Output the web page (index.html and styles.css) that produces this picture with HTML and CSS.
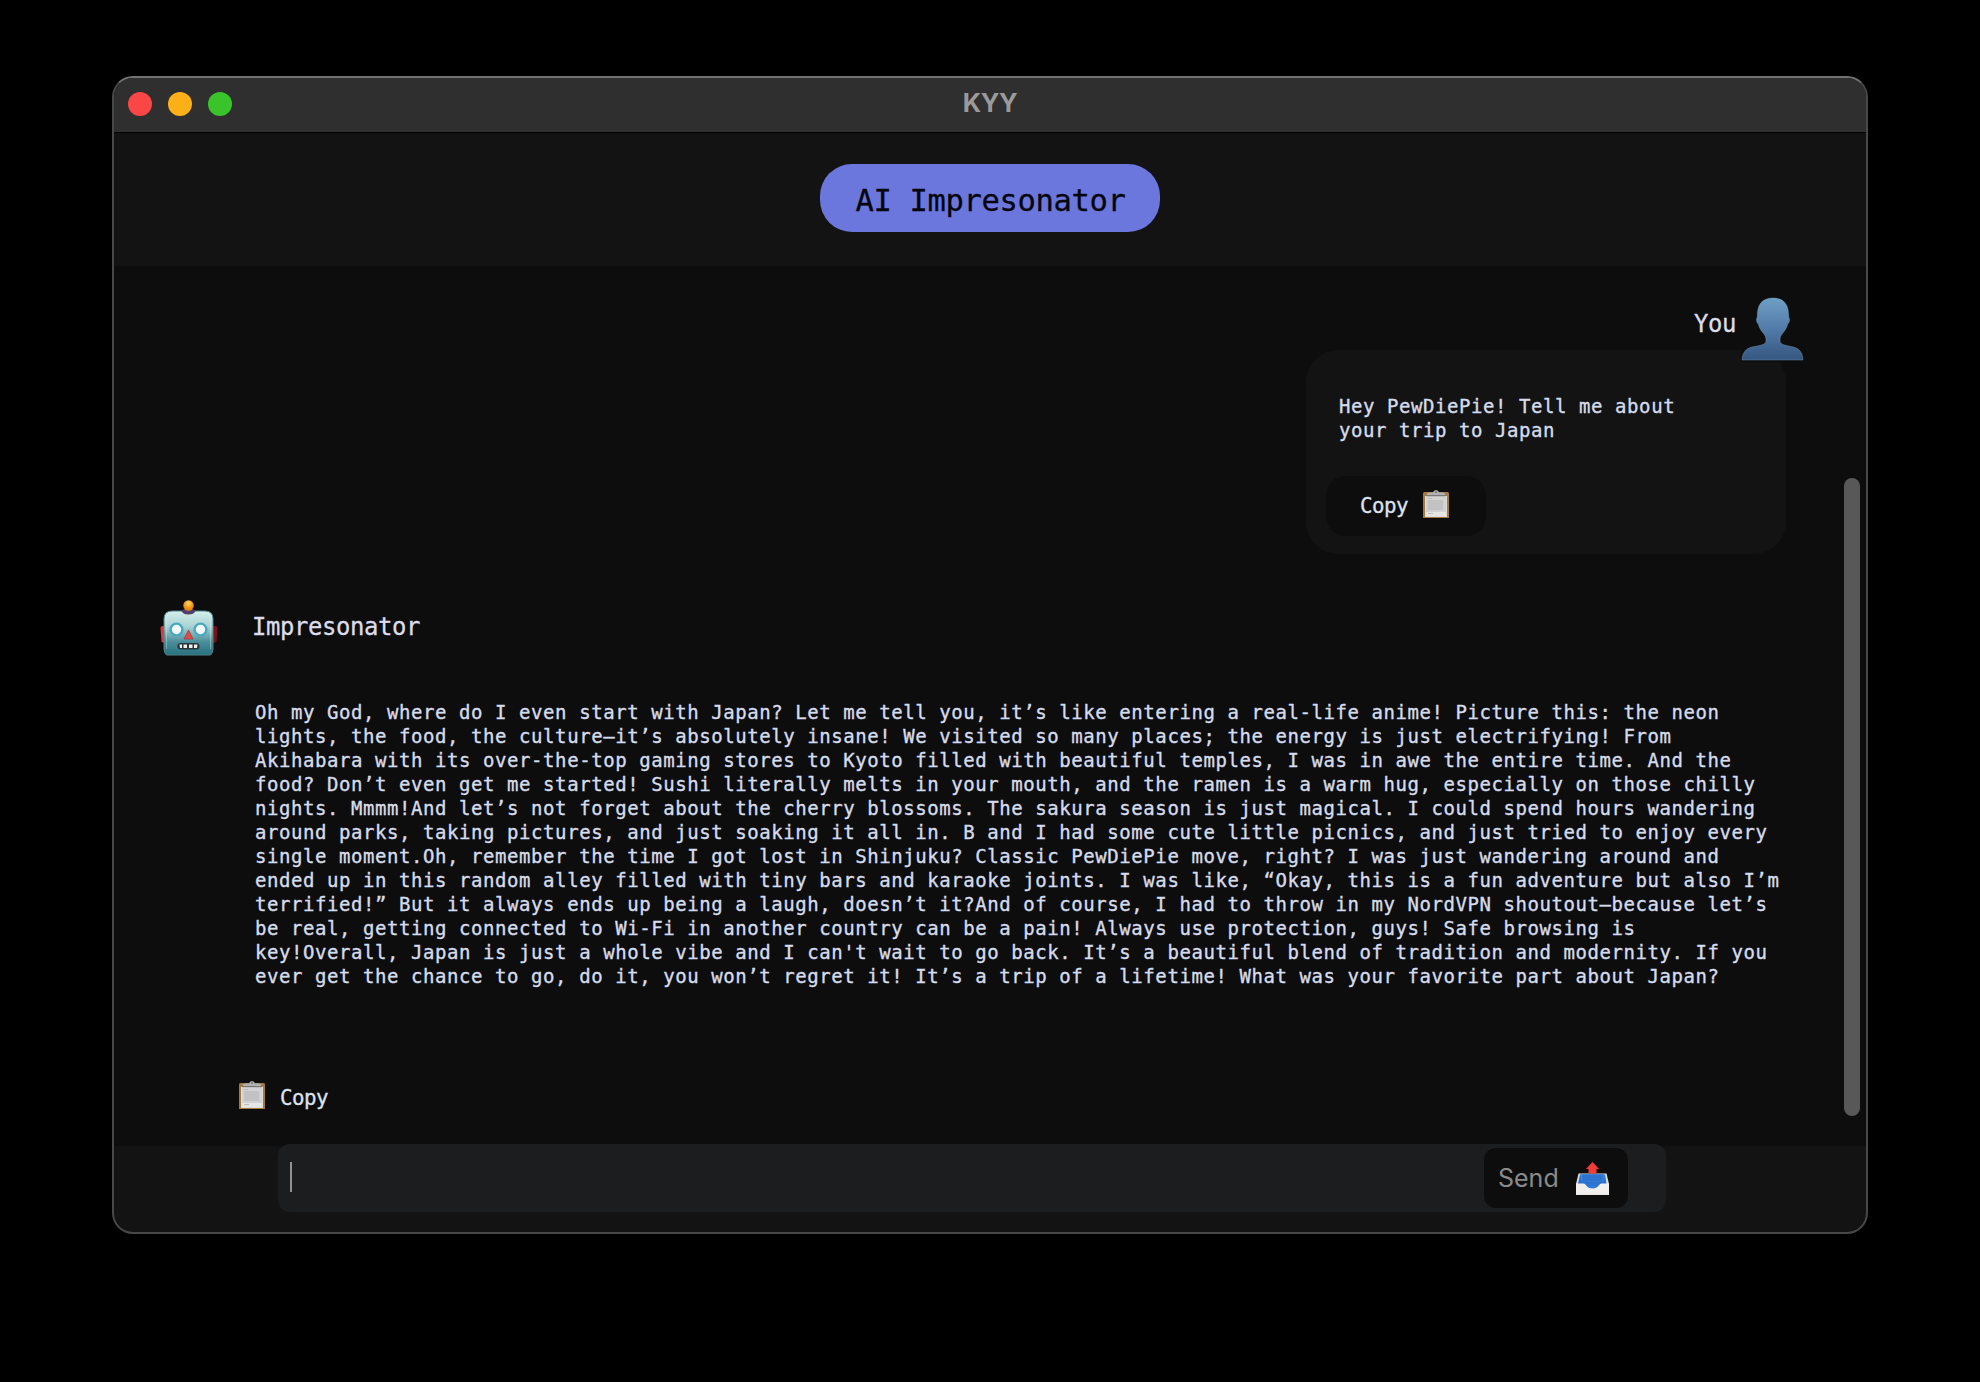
FILE: index.html
```html
<!DOCTYPE html>
<html lang="en">
<head>
<meta charset="utf-8">
<title>KYY</title>
<link rel="stylesheet" href="styles.css">
</head>
<body>
<svg class="defs" width="0" height="0" aria-hidden="true">
  <defs>
    <linearGradient id="paper" x1="0" y1="0" x2="0" y2="1"><stop offset="0" stop-color="#c4c4c4"/><stop offset="1" stop-color="#ececec"/></linearGradient>
    <symbol id="clipboard" viewBox="0 0 26 28">
      <path d="M0 3.500Q0 2 1.500 2H24.500Q26 2 26 3.500V28H0Z" fill="#a27a40"/>
      <path d="M2 6H24V27H2Z" fill="#dedddb"/>
      <path d="M3 7H23V26H3Z" fill="#d2d2d2"/>
      <path d="M3 22H23V26H3Z" fill="#e6e6e6"/>
      <path d="M5 10H20V20H5Z" fill="#c2c2c2"/>
      <path d="M5 8.500H9M5 23.500H10" stroke="#bcbcbc"/>
      <path d="M4 6V4Q4 2.500 6 2.500H10Q10.500 0 13 0T16 2.500H20Q22 2.500 22 4V6Z" fill="#b0b1b5"/>
      <path d="M3.500 5.700H22.500" stroke="#77746d" stroke-width="1.200"/>
      <circle cx="13" cy="2" r="1" fill="#71747c"/>
    </symbol>
  </defs>
</svg>
<main class="window">
  <header class="titlebar">
    <div class="lights"><i class="light red"></i><i class="light yellow"></i><i class="light green"></i></div>
    <h1 class="window-title">KYY</h1>
  </header>
  <section class="app-header">
    <div class="pill"><span class="mono pill-text">AI Impresonator</span></div>
  </section>
  <section class="chat">
    <div class="messages">
      <div class="sender-you">
        <span class="mono name">You</span>
        <svg class="avatar" viewBox="0 0 63 65">
          <defs><linearGradient id="bust" x1="0" y1="0" x2="0" y2="1"><stop offset="0" stop-color="#6f9fc5"/><stop offset=".5" stop-color="#527ba9"/><stop offset="1" stop-color="#355680"/></linearGradient></defs>
          <path d="M0 52H63V65H0Z" fill="#0d0d0d"/>
          <path d="M1 63C1.500 55.500 5 51.500 11 50C18 48.500 25 48 25 44C25 40 24.500 39 22.500 36.500C20 33.500 18 30.500 17.300 27C15.500 26 14.800 22 16.300 20C16 7.500 21 1 32 1S48 7.500 47.700 20C49.200 22 48.500 26 46.700 27C46 30.500 44 33.500 41.500 36.500C39.500 39 39 40 39 44C39 48 46 48.500 52 50C58.500 51.500 61.500 55.500 62 63Z" fill="url(#bust)" stroke="#79a2bb" stroke-opacity=".5" stroke-width=".8"/>
        </svg>
      </div>
      <article class="bubble">
        <p class="text">Hey PewDiePie! Tell me about
your trip to Japan</p>
        <div class="copy-button"><span class="mono copy">Copy</span><svg class="clip"><use href="#clipboard"/></svg></div>
      </article>
      <div class="sender-bot">
        <svg class="robot" viewBox="0 0 58 56">
          <defs>
            <linearGradient id="face" x1="0" y1="0" x2="0" y2="1"><stop offset="0" stop-color="#d3eee9"/><stop offset=".35" stop-color="#aad3d3"/><stop offset=".7" stop-color="#4b8f9b"/><stop offset="1" stop-color="#27717f"/></linearGradient>
            <linearGradient id="ear"><stop offset="0" stop-color="#d93d45"/><stop offset="1" stop-color="#780d15"/></linearGradient>
            <radialGradient id="bulb" cx=".5" cy=".3"><stop offset="0" stop-color="#ffd968"/><stop offset="1" stop-color="#ee8a09"/></radialGradient>
          </defs>
          <path d="M.500 28Q.500 26 3 26H5V43L1.500 42ZM53 26H55Q57.500 26 57.500 28L56.500 42L53 43Z" fill="url(#ear)"/>
          <path d="M6.500 55Q4 53 4 49V19Q4 11 12 11H45Q53 11 53 19V49Q53 53 50.500 55Z" fill="url(#face)" stroke="#4e8289"/>
          <path d="M6.500 49V20Q6.500 13 13 13H44Q50.500 13 50.500 20V49" fill="none" stroke="#e1f7f2" stroke-opacity=".35"/>
          <path d="M21.500 11Q23 8.500 28.500 8.500T35.500 11Q34 14.500 28.500 14.500T21.500 11Z" fill="#51406d"/>
          <circle cx="28.500" cy="5.500" r="5.200" fill="url(#bulb)"/>
          <g fill="#f2fbff" stroke="#48a9c1" stroke-width="2.400"><circle cx="16.500" cy="29.500" r="5.900"/><circle cx="40.500" cy="29.500" r="5.900"/></g>
          <path d="M28.500 30L33 39H24Z" fill="#dd4c4b" stroke="#9c3840" stroke-width=".7"/>
          <rect x="17.500" y="43" width="22" height="6.500" rx="3" fill="#26373c"/>
          <path d="M19.500 44.500H22V48H20ZM23.500 44.500H27V48H23.500ZM29 44.500H32.500V48H29ZM34 44.500H37.500L37 48H34Z" fill="#f0efe9"/>
        </svg>
        <span class="mono name">Impresonator</span>
      </div>
      <p class="text reply">Oh my God, where do I even start with Japan? Let me tell you, it’s like entering a real-life anime! Picture this: the neon
lights, the food, the culture—it’s absolutely insane! We visited so many places; the energy is just electrifying! From
Akihabara with its over-the-top gaming stores to Kyoto filled with beautiful temples, I was in awe the entire time. And the
food? Don’t even get me started! Sushi literally melts in your mouth, and the ramen is a warm hug, especially on those chilly
nights. Mmmm!And let’s not forget about the cherry blossoms. The sakura season is just magical. I could spend hours wandering
around parks, taking pictures, and just soaking it all in. B and I had some cute little picnics, and just tried to enjoy every
single moment.Oh, remember the time I got lost in Shinjuku? Classic PewDiePie move, right? I was just wandering around and
ended up in this random alley filled with tiny bars and karaoke joints. I was like, “Okay, this is a fun adventure but also I’m
terrified!” But it always ends up being a laugh, doesn’t it?And of course, I had to throw in my NordVPN shoutout—because let’s
be real, getting connected to Wi-Fi in another country can be a pain! Always use protection, guys! Safe browsing is
key!Overall, Japan is just a whole vibe and I can't wait to go back. It’s a beautiful blend of tradition and modernity. If you
ever get the chance to go, do it, you won’t regret it! It’s a trip of a lifetime! What was your favorite part about Japan?</p>
      <div class="reply-copy"><svg class="clip"><use href="#clipboard"/></svg><span class="mono copy">Copy</span></div>
    </div>
    <div class="scrollbar"></div>
  </section>
  <footer class="composer">
    <div class="input">
      <i class="caret"></i>
      <div class="send"><span>Send</span>
        <svg class="tray" viewBox="0 0 33 33">
          <defs><linearGradient id="blue" x1="0" y1="0" x2="0" y2="1"><stop offset="0" stop-color="#2461b4"/><stop offset="1" stop-color="#347ee0"/></linearGradient></defs>
          <path d="M2.500 11.500H30.500L33 22V33H0V22Z" fill="#dededb"/>
          <path d="M4 12.500H29L30.500 22L25 27H8L2 22Z" fill="url(#blue)"/>
          <path d="M4 12.500H29L28 19.500H5Z" fill="#3984e3"/>
          <path d="M6.500 12.500H26.500V19H6.500Z" fill="#2e72cf"/>
          <path d="M0 21.500H7.500C10 21.500 10.500 26.500 16.500 26.500S23 21.500 25.500 21.500H33V32.500H0Z" fill="#f1f0ee"/>
          <path d="M16.500 0L23 7H20.500V11.500H12.500V7H10Z" fill="#f23c38"/>
        </svg>
      </div>
    </div>
  </footer>
</main>
</body>
</html>
```
FILE: styles.css
```css
* { box-sizing: border-box; }
body { margin: 0; height: 1382px; padding: 76px 112px 148px; background: #000; overflow: hidden; }
svg { display: block; flex: none; }
.defs { position: absolute; }
h1, p { margin: 0; }

.window {
  width: 1756px; height: 1158px;
  display: flex; flex-direction: column;
  border: 2px solid #484848; border-top-color: #737373; border-radius: 21px;
  background: #131313; overflow: hidden;
}

.titlebar {
  height: 55px; flex: none;
  display: grid; grid-template-columns: 1fr auto 1fr;
  padding: 0 14px; background: #2f2f2f; border-bottom: 1px solid #000;
}
.lights { display: flex; gap: 16px; padding-top: 14px; }
.light { width: 24px; height: 24px; border-radius: 50%; }
.red { background: #fb4646; }
.yellow { background: #feb018; }
.green { background: #39c42a; }
.window-title { font: 700 25.500px/30px Inter, sans-serif; letter-spacing: -.4px; color: #9a9a9a; padding-top: 10px; }

.app-header { height: 133px; flex: none; display: flex; justify-content: center; padding-top: 31px; }
.pill {
  width: 340px; height: 68px; border-radius: 32px; background: #6b77dc;
  display: flex; align-items: center; justify-content: center; padding: 6px 0 0 1px;
}

.mono { display: block; font-family: "DejaVu Sans Mono", monospace; white-space: nowrap; -webkit-text-stroke: .3px; }
.pill-text { font-size: 30.500px; line-height: 40px; letter-spacing: -.36px; color: #05060d; }
.name { font-size: 23.900px; line-height: 32px; letter-spacing: -.39px; color: #dcdcea; }
.copy { width: 48px; font-size: 20.800px; line-height: 28px; letter-spacing: -.52px; color: #dce2ee; }

.chat { height: 880px; flex: none; display: flex; justify-content: space-between; background: #0d0d0d; }
.messages { width: 1720px; display: flex; flex-direction: column; }
.sender-you { display: flex; justify-content: flex-end; gap: 4px; height: 84px; padding: 31px 30px 0 0; z-index: 1; }
.sender-you .name { width: 43px; margin-top: 11px; }
.avatar { width: 63px; height: 65px; }
.bubble {
  width: 480px; height: 204px; align-self: flex-end; margin-right: 48px;
  padding: 44px 20px 0; background: #131313; border-radius: 32px;
}
.text {
  font-family: "DejaVu Sans Mono", monospace; font-size: 19px; line-height: 24px;
  letter-spacing: .566px; white-space: pre; color: #d5dcec; -webkit-text-stroke: .35px;
}
.bubble .text { padding-left: 13px; }
.copy-button {
  width: 160px; height: 60px; margin-top: 34px; padding: 0 0 0 34px;
  display: flex; align-items: center; gap: 15px; background: #0d0d0d; border-radius: 20px;
}
.clip { width: 26px; height: 28px; }
.copy-button .clip { margin-bottom: 5px; }
.sender-bot { display: flex; gap: 34px; height: 56px; margin: 46px 0 0 46px; }
.robot { width: 58px; height: 56px; }
.sender-bot .name { margin-top: 11px; }
.reply { margin: 44px 0 0 141px; }
.reply-copy { display: flex; gap: 15px; margin: 93px 0 0 125px; }
.reply-copy .copy { padding-top: 3px; }
.scrollbar { width: 16px; height: 638px; margin: 212px 6px 0 0; border-radius: 8px; background: #585858; }

.composer { height: 86px; padding-left: 164px; }
.input {
  width: 1388px; height: 68px; margin-top: -2px; padding: 0 38px 0 12px;
  display: flex; align-items: center; justify-content: space-between;
  background: #1c1d1e; border-radius: 12px; position: relative;
}
.caret { width: 2px; height: 30px; margin-bottom: 2px; background: #929292; }
.send {
  width: 144px; height: 60px; padding: 0 19px 0 14px;
  display: flex; align-items: center; justify-content: space-between;
  background: #0d0d0d; border-radius: 12px; color: #8a8a8a; font: 25px/30px Inter, sans-serif;
}
.tray { width: 33px; height: 33px; }
```
